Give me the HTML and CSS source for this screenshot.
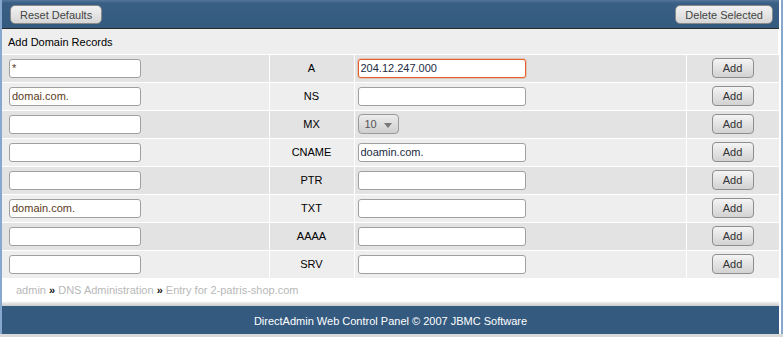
FILE: index.html
```html
<!DOCTYPE html>
<html lang="en">
  <head>
    <meta charset="UTF-8" />
    <title>DNS Administration: Entry for 2-patris-shop.com</title>
    <link rel="stylesheet" href="styles.css">
  </head>
  <body>
    <div class="frame">
      <div class="toolbar">
        <button class="btn">Reset Defaults</button>
        <button class="btn">Delete Selected</button>
      </div>

      <table class="records">
        <colgroup>
          <col class="col-name" />
          <col class="col-type" />
          <col class="col-value" />
          <col class="col-action" />
        </colgroup>
        <tr class="title-row">
          <td colspan="4">Add Domain Records</td>
        </tr>
        <tr class="odd">
          <td class="name"><input type="text" class="field name-field" value="*" /></td>
          <td class="type">A</td>
          <td class="value"><input type="text" class="field value-field focus" value="204.12.247.000" /></td>
          <td class="action"><button class="add">Add</button></td>
        </tr>
        <tr class="even">
          <td class="name"><input type="text" class="field name-field" value="domai.com." /></td>
          <td class="type">NS</td>
          <td class="value"><input type="text" class="field value-field" /></td>
          <td class="action"><button class="add">Add</button></td>
        </tr>
        <tr class="odd">
          <td class="name"><input type="text" class="field name-field" /></td>
          <td class="type">MX</td>
          <td class="value"><span class="select">10 <span class="arrow"></span></span></td>
          <td class="action"><button class="add">Add</button></td>
        </tr>
        <tr class="even">
          <td class="name"><input type="text" class="field name-field" /></td>
          <td class="type">CNAME</td>
          <td class="value"><input type="text" class="field value-field" value="doamin.com." /></td>
          <td class="action"><button class="add">Add</button></td>
        </tr>
        <tr class="odd">
          <td class="name"><input type="text" class="field name-field" /></td>
          <td class="type">PTR</td>
          <td class="value"><input type="text" class="field value-field" /></td>
          <td class="action"><button class="add">Add</button></td>
        </tr>
        <tr class="even">
          <td class="name"><input type="text" class="field name-field" value="domain.com." /></td>
          <td class="type">TXT</td>
          <td class="value"><input type="text" class="field value-field" /></td>
          <td class="action"><button class="add">Add</button></td>
        </tr>
        <tr class="odd">
          <td class="name"><input type="text" class="field name-field" /></td>
          <td class="type">AAAA</td>
          <td class="value"><input type="text" class="field value-field" /></td>
          <td class="action"><button class="add">Add</button></td>
        </tr>
        <tr class="even">
          <td class="name"><input type="text" class="field name-field" /></td>
          <td class="type">SRV</td>
          <td class="value"><input type="text" class="field value-field" /></td>
          <td class="action"><button class="add">Add</button></td>
        </tr>
      </table>

      <div class="crumbs">
        <span>admin</span> <b>&raquo;</b> <span>DNS Administration</span> <b>&raquo;</b> <span>Entry for 2-patris-shop.com</span>
      </div>

      <div class="footer">
        DirectAdmin Web Control Panel &copy; 2007 JBMC Software
      </div>
    </div>
  </body>
</html>
```

FILE: styles.css
```css
* {
  margin: 0;
  padding: 0;
  box-sizing: border-box;
}
body {
  background: #d9d9d9;
  font-family: "Liberation Sans", Arial, sans-serif;
  font-size: 11px;
  color: #000;
}
.frame {
  width: 783px;
  height: 334px;
  background: #fff;
  border-left: 2px solid #86a8cc;
  border-right: 2px solid #86a8cc;
  padding-right: 2px;
  display: flex;
  flex-direction: column;
}
.toolbar {
  height: 29px;
  background: linear-gradient(#56779b, #3a5f85 3px, #335a7f);
  border-bottom: 1px solid #2a2a2a;
  display: flex;
  justify-content: space-between;
  align-items: flex-start;
  padding: 5px 6px 0 8px;
}
.btn {
  height: 19px;
  padding: 0 9px;
  font-family: "Liberation Sans", Arial, sans-serif;
  font-size: 11px;
  color: #444;
  background: linear-gradient(#f2f2f2, #d6d6d6);
  border: 1px solid #8a8a8a;
  border-radius: 5px;
}
.records {
  width: 777px;
  border-collapse: collapse;
  table-layout: fixed;
}
.col-name {
  width: 267px;
}
.col-type {
  width: 85px;
}
.col-value {
  width: 332px;
}
.records td {
  border: 1px solid #fff;
  border-top: 0;
  border-left: 0;
  height: 28px;
  padding: 0;
}
.title-row td {
  height: 25px;
  background: #eeeeee;
  padding-left: 6px;
  padding-top: 1px;
}
.odd td {
  background: #e3e3e3;
}
.even td {
  background: #eeeeee;
}
.records td.name {
  padding-left: 7px;
}
.records td.type {
  text-align: center;
}
.records td.value {
  padding-left: 3px;
}
.records td.action {
  border-right: 0;
  text-align: center;
}
.field {
  display: block;
  height: 19px;
  border: 1px solid #a0a0a0;
  border-radius: 3px;
  background: #fff;
  padding: 0 2px;
  font-family: "Liberation Sans", Arial, sans-serif;
  font-size: 11px;
  outline: none;
}
.name-field {
  width: 132px;
  color: #5a3b1c;
}
.value-field {
  width: 168px;
  color: #1c2b44;
}
.focus {
  border-color: #e0612c;
  box-shadow: 0 0 0 1px rgba(224, 97, 44, 0.25);
}
.select {
  display: inline-flex;
  align-items: center;
  gap: 7px;
  height: 20px;
  width: 41px;
  padding-left: 6px;
  border: 1px solid #9a9a9a;
  border-radius: 4px;
  background: linear-gradient(#ececec, #cfcfcf);
  color: #555;
  font-size: 11px;
}
.arrow {
  width: 0;
  height: 0;
  border-left: 4px solid transparent;
  border-right: 4px solid transparent;
  border-top: 5px solid #777;
  margin-top: 2px;
}
.add {
  width: 42px;
  height: 20px;
  font-family: "Liberation Sans", Arial, sans-serif;
  font-size: 11px;
  color: #333;
  background: linear-gradient(#f4f4f4, #d2d2d2);
  border: 1px solid #8e8e8e;
  border-radius: 4px;
}
.crumbs {
  height: 27px;
  padding: 5px 0 0 14px;
  font-size: 11px;
  color: #b8b8b8;
  background: linear-gradient(#fff 22px, #e6e6e6 24px, #c9c9c9 27px);
}
.crumbs b {
  color: #111;
}
.footer {
  flex: 1;
  background: #345a7f;
  color: #fff;
  text-align: center;
  padding-top: 9px;
  font-size: 11px;
}
```
